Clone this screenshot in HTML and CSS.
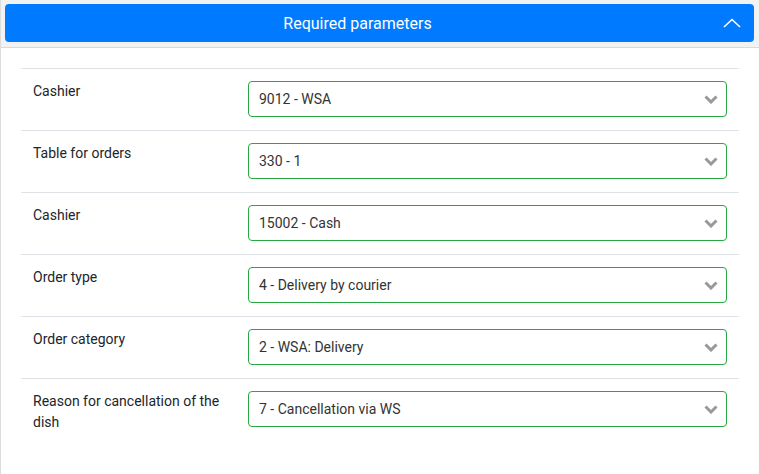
FILE: index.html
```html
<!DOCTYPE html>
<html>
<head>
<meta charset="utf-8">
<link rel="stylesheet" href="styles.css">
</head>
<body>
<div class="card">
  <div class="card-head">
    <div class="head-btn">
      <span class="head-title">Required parameters</span>
      <span class="head-icon">
        <svg width="18" height="10" viewBox="0 0 18 10"><path d="M1 9 L9 1.5 L17 9" fill="none" stroke="#fff" stroke-width="1.6"/></svg>
      </span>
    </div>
  </div>
  <div class="card-body">
    <div class="row">
      <div class="label">Cashier</div>
      <div class="select"><span>9012 - WSA</span><svg class="chev" width="14" height="9" viewBox="0 0 14 9"><path d="M1.5 1.5 L7 7 L12.5 1.5" fill="none" stroke="#999" stroke-width="3"/></svg></div>
    </div>
    <div class="row">
      <div class="label">Table for orders</div>
      <div class="select"><span>330 - 1</span><svg class="chev" width="14" height="9" viewBox="0 0 14 9"><path d="M1.5 1.5 L7 7 L12.5 1.5" fill="none" stroke="#999" stroke-width="3"/></svg></div>
    </div>
    <div class="row">
      <div class="label">Cashier</div>
      <div class="select"><span>15002 - Cash</span><svg class="chev" width="14" height="9" viewBox="0 0 14 9"><path d="M1.5 1.5 L7 7 L12.5 1.5" fill="none" stroke="#999" stroke-width="3"/></svg></div>
    </div>
    <div class="row">
      <div class="label">Order type</div>
      <div class="select"><span>4 - Delivery by courier</span><svg class="chev" width="14" height="9" viewBox="0 0 14 9"><path d="M1.5 1.5 L7 7 L12.5 1.5" fill="none" stroke="#999" stroke-width="3"/></svg></div>
    </div>
    <div class="row">
      <div class="label">Order category</div>
      <div class="select"><span>2 - WSA: Delivery</span><svg class="chev" width="14" height="9" viewBox="0 0 14 9"><path d="M1.5 1.5 L7 7 L12.5 1.5" fill="none" stroke="#999" stroke-width="3"/></svg></div>
    </div>
    <div class="row">
      <div class="label">Reason for cancellation of the dish</div>
      <div class="select"><span>7 - Cancellation via WS</span><svg class="chev" width="14" height="9" viewBox="0 0 14 9"><path d="M1.5 1.5 L7 7 L12.5 1.5" fill="none" stroke="#999" stroke-width="3"/></svg></div>
    </div>
  </div>
</div>
</body>
</html>
```

FILE: styles.css
```css
html, body {
  margin: 0;
  padding: 0;
  background: #fff;
  font-family: Roboto, "Liberation Sans", sans-serif;
  overflow: hidden;
}
.card {
  border-left: 1px solid #dcdcdc;
  height: 474px;
  box-sizing: border-box;
}
.card-head {
  background: #f2f2f2;
  padding: 4px 5px 5px 4px;
  border-bottom: 1px solid #d9d9d9;
}
.head-btn {
  background: #007bff;
  border-radius: 4px;
  height: 38px;
  display: flex;
  align-items: center;
}
.head-title {
  flex: 1;
  text-align: center;
  color: #fff;
  font-size: 16px;
}
.head-icon {
  width: 44px;
  display: flex;
  justify-content: center;
  align-items: center;
}
.head-icon svg { display: block; }
.card-body {
  padding: 20px 20px 0 20px;
}
.row {
  border-top: 1px solid #dee2e6;
  padding: 12px 12px 13px 12px;
  display: grid;
  grid-template-columns: 215px 1fr;
  align-items: start;
}
.label {
  font-size: 14px;
  line-height: 21px;
  color: #212529;
  padding-right: 12px;
}
.select {
  height: 36px;
  box-sizing: border-box;
  border: 1px solid #28a745;
  border-radius: 4px;
  display: flex;
  align-items: center;
  padding: 0 8px 0 10px;
  font-size: 14px;
  color: #333;
}
.select span { flex: 1; }
.chev { display: block; }
```
